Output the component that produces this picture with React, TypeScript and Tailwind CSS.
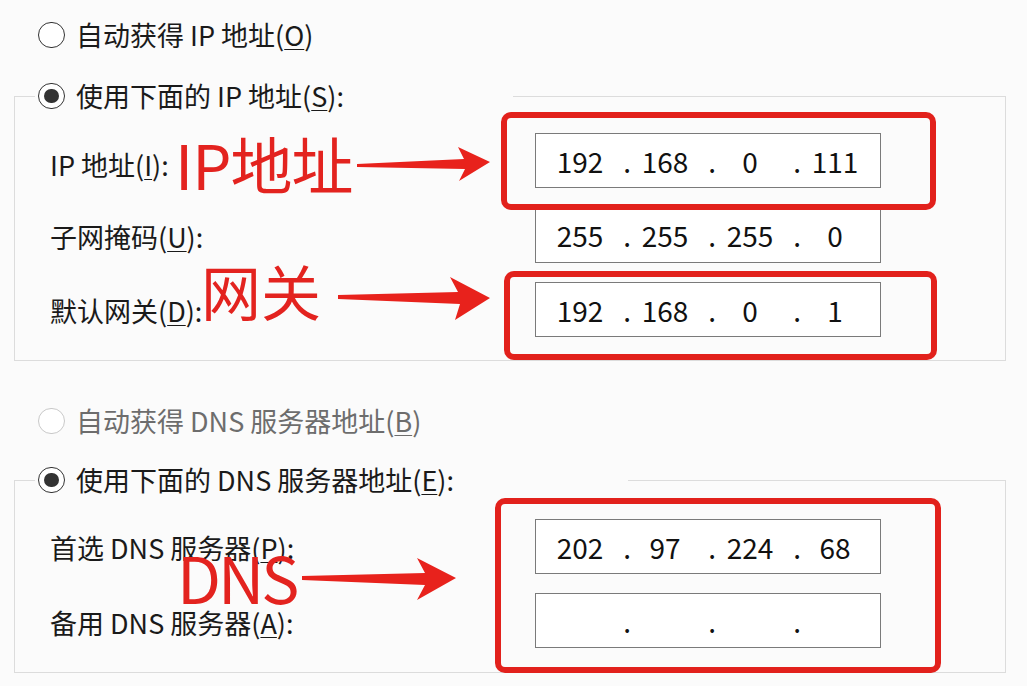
import React from "react";

const FONT = '"Noto Sans CJK SC", "Noto Sans", sans-serif';

function Radio({ checked, disabled }: { checked?: boolean; disabled?: boolean }) {
  return (
    <span
      className={
        "flex w-[27px] h-[26px] shrink-0 items-center justify-center rounded-full border-[1.5px] bg-white " +
        (disabled ? "border-[#c9c9c9]" : "border-[#333333]")
      }
    >
      {checked ? <span className="block w-[15px] h-[14px] rounded-full bg-[#333333]" /> : null}
    </span>
  );
}

function U({ children }: { children: React.ReactNode }) {
  return <span className="underline underline-offset-[3px] decoration-1">{children}</span>;
}

function IpBox({ parts }: { parts: string[] }) {
  return (
    <div className="flex h-[55px] w-[346px] items-center border border-[#7a7a7a] bg-white pl-[10px] text-[28px] leading-none text-[#111]">
      {parts.map((p, i) => (
        <React.Fragment key={i}>
          <span className="w-[68px] text-center">{p}</span>
          {i < 3 ? <span className="w-[17px] text-right">.</span> : null}
        </React.Fragment>
      ))}
    </div>
  );
}

function Row({ label, parts, offset }: { label: React.ReactNode; parts: string[]; offset: string }) {
  return (
    <div className="flex items-center">
      <div className={"w-[485px] text-[27px] leading-[30px] text-[#1a1a1a] " + offset}>{label}</div>
      <IpBox parts={parts} />
    </div>
  );
}

export default function App() {
  return (
    <div
      className="relative h-[686px] w-[1027px] overflow-hidden bg-[#fbfbfb] pt-[20px]"
      style={{ fontFamily: FONT }}
    >
      {/* radio 1 */}
      <div className="ml-[38px] flex h-[30px] items-center gap-[11px] text-[27px] leading-[30px] text-[#1a1a1a]">
        <Radio />
        <span>
          自动获得 IP 地址(<U>O</U>)
        </span>
      </div>

      {/* group 1 */}
      <fieldset className="ml-[14px] mt-[31px] w-[992px] border border-[#dcdcdc] pb-[23px] pt-[22px]">
        <legend className="ml-[20px] flex h-[30px] w-[478px] items-center gap-[11px] pl-[3px] text-[27px] leading-[30px] text-[#1a1a1a]">
          <Radio checked />
          <span>
            使用下面的 IP 地址(<U>S</U>):
          </span>
        </legend>
        <div className="flex flex-col gap-[19.5px] pl-[35px]">
          <Row
            label={
              <>
                IP 地址(<U>I</U>):
              </>
            }
            parts={["192", "168", "0", "111"]}
            offset="pt-[8px]"
          />
          <Row
            label={
              <>
                子网掩码(<U>U</U>):
              </>
            }
            parts={["255", "255", "255", "0"]}
            offset="pt-[4px]"
          />
          <Row
            label={
              <>
                默认网关(<U>D</U>):
              </>
            }
            parts={["192", "168", "0", "1"]}
            offset="pt-[3px]"
          />
        </div>
      </fieldset>

      {/* radio 3 (disabled) */}
      <div className="ml-[38px] mt-[45px] flex h-[30px] items-center gap-[11px] text-[27px] leading-[30px] text-[#6d6d6d]">
        <Radio disabled />
        <span>
          自动获得 DNS 服务器地址(<U>B</U>)
        </span>
      </div>

      {/* group 2 */}
      <fieldset className="ml-[14px] mt-[29px] w-[992px] border border-[#dcdcdc] pb-[24px] pt-[24px]">
        <legend className="ml-[20px] flex h-[30px] w-[593px] items-center gap-[11px] pl-[3px] text-[27px] leading-[30px] text-[#1a1a1a]">
          <Radio checked />
          <span>
            使用下面的 DNS 服务器地址(<U>E</U>):
          </span>
        </legend>
        <div className="flex flex-col gap-[19px] pl-[35px]">
          <Row
            label={
              <>
                首选 DNS 服务器(<U>P</U>):
              </>
            }
            parts={["202", "97", "224", "68"]}
            offset="pt-[3px]"
          />
          <Row
            label={
              <>
                备用 DNS 服务器(<U>A</U>):
              </>
            }
            parts={["", "", "", ""]}
            offset="pt-[4px]"
          />
        </div>
      </fieldset>

      {/* red annotation boxes */}
      <div className="pointer-events-none absolute left-[501px] top-[112px] h-[98px] w-[435px] rounded-[10px] border-[6px] border-[#e2211c]" />
      <div className="pointer-events-none absolute left-[504px] top-[271px] h-[89px] w-[433px] rounded-[10px] border-[6px] border-[#e2211c]" />
      <div className="pointer-events-none absolute left-[495px] top-[498px] h-[175px] w-[446px] rounded-[10px] border-[6px] border-[#e2211c]" />

      {/* red labels */}
      <div className="pointer-events-none absolute left-[175px] top-[132px] text-[62px] leading-none tracking-[-1px] text-[#e3231f]">
        IP地址
      </div>
      <div className="pointer-events-none absolute left-[201px] top-[260px] text-[60px] leading-none text-[#e3231f]">
        网关
      </div>
      <div className="pointer-events-none absolute left-[177px] top-[544px] text-[64px] leading-none tracking-[-3px] text-[#e3231f]">
        DNS
      </div>

      {/* arrows */}
      <svg className="pointer-events-none absolute left-0 top-0" width="1027" height="686" viewBox="0 0 1027 686">
        <polygon
          fill="#e8221c"
          points="357,164 464,159 458,147 490,162 459,181 465,169 357,167"
        />
        <polygon
          fill="#e8221c"
          points="338,295 458,292 450,277 490,298 455,320 460,304 338,299"
        />
        <polygon
          fill="#e8221c"
          points="302,576 425,573 417,558 456,578 417,600 425,585 302,580"
        />
      </svg>
    </div>
  );
}
